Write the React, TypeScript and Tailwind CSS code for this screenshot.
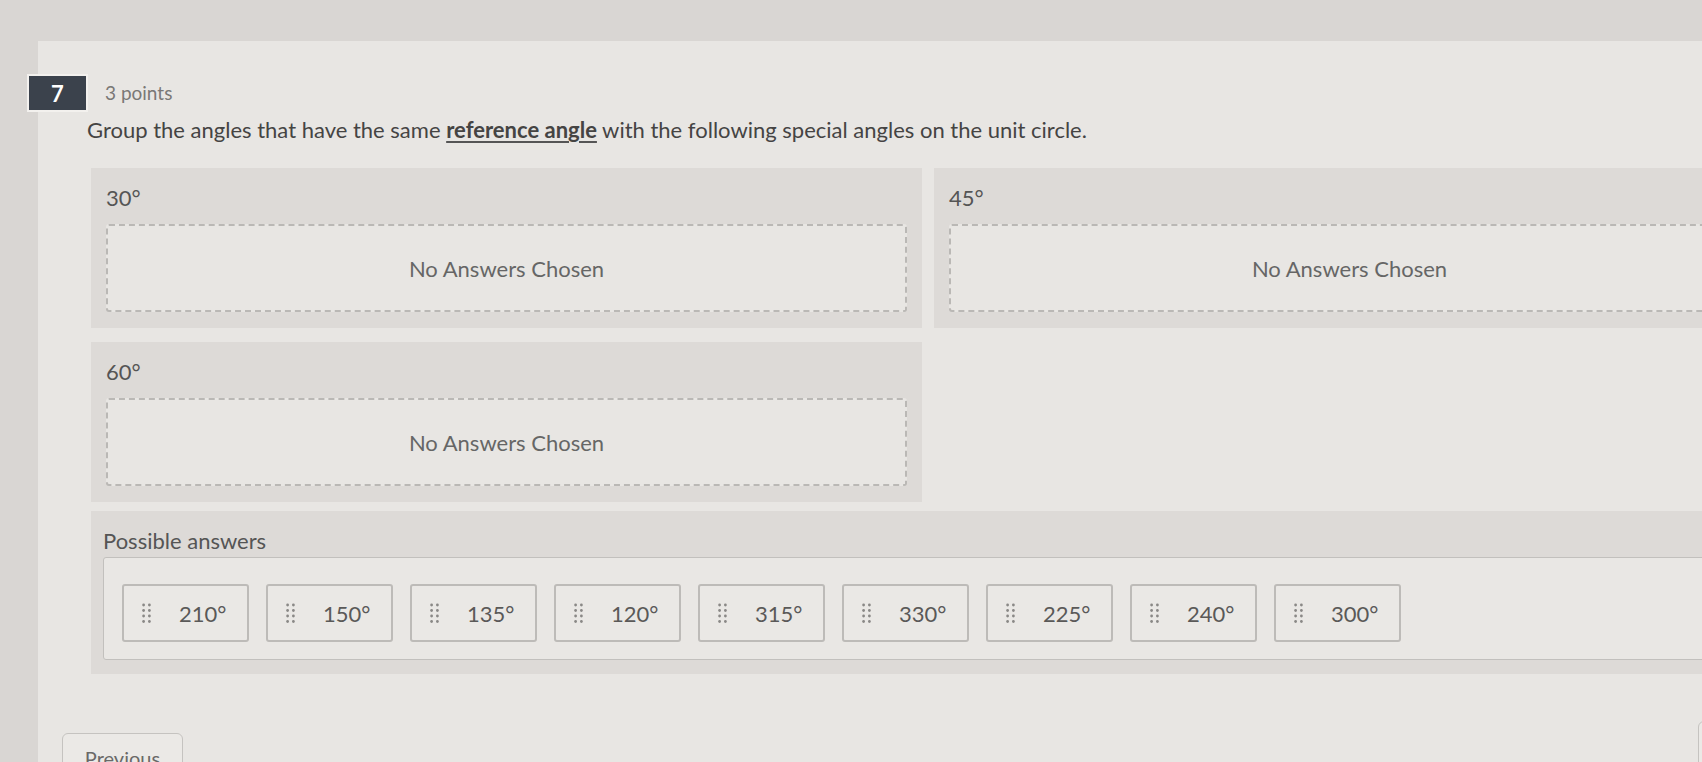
import React from 'react';

const groups = ['30°', '45°', '60°'];
const answers = ['210°', '150°', '135°', '120°', '315°', '330°', '225°', '240°', '300°'];

function Grip() {
  return (
    <svg width="9" height="21" viewBox="0 0 9 21" className="shrink-0">
      {[0, 1, 2, 3].map((r) => (
        <g key={r} fill="#8a8886">
          <circle cx="1.6" cy={2 + r * 5.5} r="1.4" />
          <circle cx="7.4" cy={2 + r * 5.5} r="1.4" />
        </g>
      ))}
    </svg>
  );
}

function Group({ label }: { label: string }) {
  return (
    <div className="bg-[#dddad7] pt-[17px] px-[15px] pb-[16px]">
      <div className="text-[22px] leading-[26px] text-[#555]">{label}</div>
      <div className="mt-[13px] h-[88px] border-2 border-dashed border-[#bab8b5] rounded-[3px] bg-[#e8e6e3] flex items-center justify-center">
        <span className="text-[22px] text-[#666]">No Answers Chosen</span>
      </div>
    </div>
  );
}

export default function App() {
  return (
    <div
      className="w-[1702px] h-[762px] overflow-hidden bg-[#d9d6d3] pt-[41px] pl-[38px]"
      style={{ fontFamily: 'Lato, "Open Sans", sans-serif' }}
    >
      <div className="w-[1760px] h-[800px] bg-[#e8e6e3] pt-[33px]">
        <div className="flex items-center -ml-[11px]">
          <div className="w-[61px] h-[38px] bg-[#3b424c] border-2 border-[#f3f1ee] flex items-center justify-center text-white font-bold text-[22px]">
            7
          </div>
          <span className="ml-[17px] text-[19px] text-[#7a7876]">3 points</span>
        </div>

        <div className="pl-[49px] mt-[3px] text-[22px] leading-[29px] text-[#454443]">
          Group the angles that have the same{' '}
          <span className="font-bold underline underline-offset-[3px] decoration-[#555]">reference angle</span> with the
          following special angles on the unit circle.
        </div>

        <div className="pl-[53px] mt-[24px]">
          <div className="grid grid-cols-[831px_831px] gap-x-[12px] gap-y-[14px]">
            {groups.map((g) => (
              <Group key={g} label={g} />
            ))}
          </div>

          <div className="mt-[9px] bg-[#dddad7] pt-[17px] pl-[12px] pb-[14px]">
            <div className="text-[22px] leading-[26px] text-[#555]">Possible answers</div>
            <div className="mt-[3px] h-[103px] border border-[#c2c0bd] rounded-[3px] bg-[#e9e7e4] pt-[26px] pl-[18px] flex gap-[17px]">
              {answers.map((a) => (
                <div
                  key={a}
                  className="w-[127px] h-[58px] border-2 border-[#bdbbb8] rounded-[3px] bg-[#eae8e5] flex items-center pl-[18px]"
                >
                  <Grip />
                  <span className="ml-[28px] text-[22px] text-[#5a5958]">{a}</span>
                </div>
              ))}
            </div>
          </div>
        </div>

        <div className="flex items-start justify-between pl-[24px] mt-[59px]">
          <button className="w-[121px] h-[48px] border border-[#c5c3c0] rounded-md bg-[#ebe9e6] text-[20px] text-[#6a6968] pt-[2px]">
            Previous
          </button>
          <button className="w-[100px] h-[48px] -mt-[12px] border border-[#c5c3c0] rounded-md bg-[#ebe9e6] text-[20px] text-[#6a6968]">
            Next
          </button>
        </div>
      </div>
    </div>
  );
}
